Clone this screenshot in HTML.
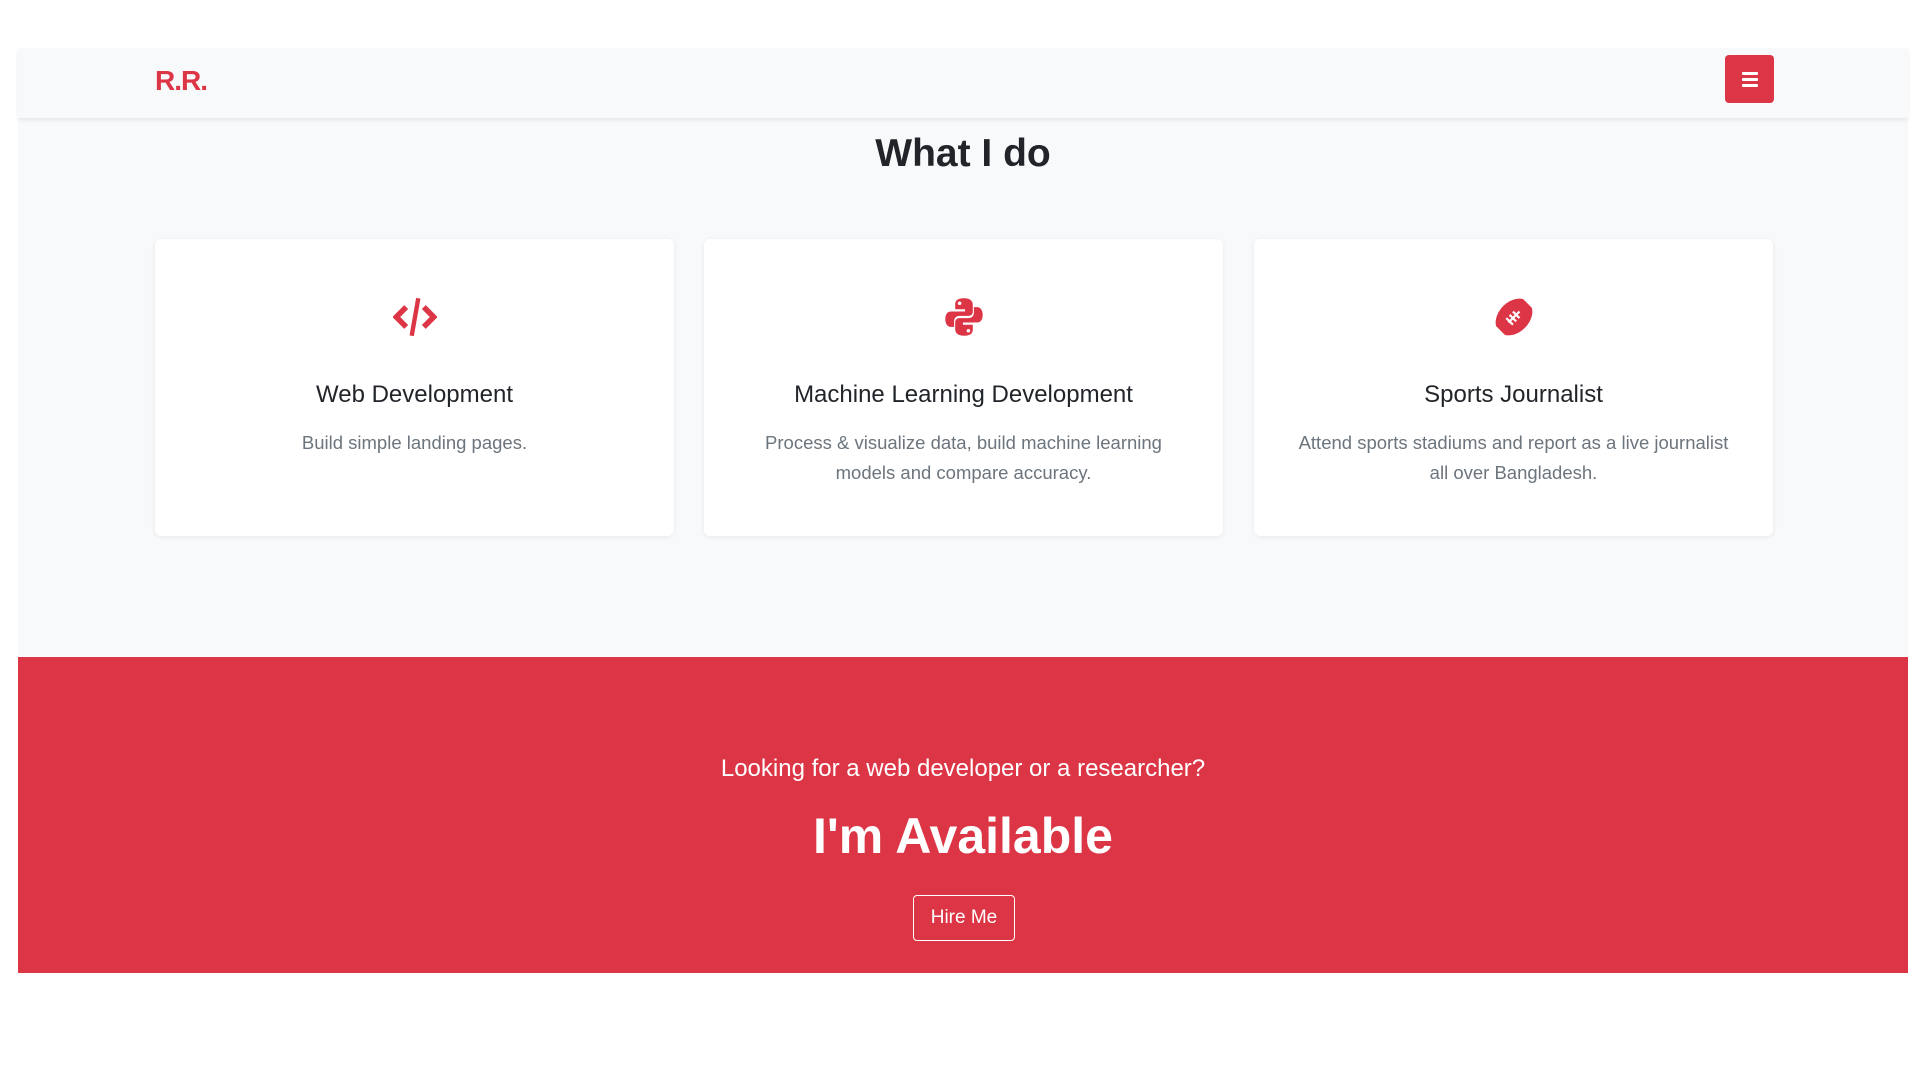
<!DOCTYPE html>
<html><head><meta charset="utf-8"><style>
*{box-sizing:border-box;margin:0;padding:0}
body{width:1920px;height:1080px;background:#fff;font-family:"Liberation Sans",sans-serif;position:relative;overflow:hidden}
.wrap{position:absolute;left:18px;top:48px;width:1890px;height:925px;background:#f8f9fa}
.nav{position:absolute;left:0;top:0;width:1890px;height:70px;background:#f8f9fa;box-shadow:0 2px 4px rgba(0,0,0,.08)}
.logo{position:absolute;left:137px;top:17px;font-size:28px;font-weight:bold;color:#dc3545;letter-spacing:-1px}
.burger{position:absolute;left:1707px;top:7px;width:49px;height:48px;background:#dc3545;border-radius:4px}
.burger i{position:absolute;left:17px;width:16px;height:3px;background:#fff;border-radius:1px}
h2{position:absolute;left:0;width:1890px;top:84px;text-align:center;font-size:39px;font-weight:bold;color:#212529}
.card{position:absolute;top:191px;width:519px;height:297px;background:#fff;border-radius:6px;box-shadow:0 1px 4px rgba(0,0,0,.07);text-align:center}
.card svg{position:absolute;left:50%;top:56px;margin-left:-22px}
.card h3{position:absolute;left:0;right:0;top:142px;font-size:24px;font-weight:normal;color:#212529}
.card p{position:absolute;left:40px;right:40px;top:189px;font-size:18.5px;line-height:30px;color:#6c757d}
.red{position:absolute;left:0;top:609px;width:1890px;height:316px;background:#dc3545;text-align:center;color:#fff}
.red .s{position:absolute;left:0;right:0;top:98px;font-size:24px}
.red .b{position:absolute;left:0;right:0;top:150px;font-size:50px;font-weight:bold}
.btn{position:absolute;left:895px;top:238px;width:102px;height:46px;border:1px solid #fff;border-radius:4px;font-size:19px;line-height:44px}
</style></head><body>
<div class="wrap">
<div class="nav"><div class="logo">R.R.</div><div class="burger"><i style="top:17px"></i><i style="top:23px"></i><i style="top:29px"></i></div></div>
<h2>What I do</h2>
<div class="card" style="left:137px">
<svg width="44" height="44" viewBox="0 0 40 40"><path d="M12 11 L3 20 L12 29" stroke="#dc3545" stroke-width="5" fill="none"/><path d="M28 11 L37 20 L28 29" stroke="#dc3545" stroke-width="5" fill="none"/><path d="M23 3 L17 37" stroke="#dc3545" stroke-width="4"/></svg>
<h3>Web Development</h3><p>Build simple landing pages.</p></div>
<div class="card" style="left:686px">
<svg width="44" height="44" viewBox="0 0 40 40"><path d="M20 3 C13 3 12 6 12 9 V13 H21 V15 H8 C4 15 3 19 3 22 C3 26 5 29 8 29 H11 V24 C11 21 13 19 16 19 H24 C27 19 28 17 28 15 V9 C28 5 25 3 20 3Z" fill="#dc3545"/><path d="M20 37 C27 37 28 34 28 31 V27 H19 V25 H32 C36 25 37 21 37 18 C37 14 35 11 32 11 H29 V16 C29 19 27 21 24 21 H16 C13 21 12 23 12 25 V31 C12 35 15 37 20 37Z" fill="#dc3545"/><circle cx="16" cy="7.5" r="1.6" fill="#fff"/><circle cx="24" cy="32.5" r="1.6" fill="#fff"/></svg>
<h3>Machine Learning Development</h3><p>Process &amp; visualize data, build machine learning models and compare accuracy.</p></div>
<div class="card" style="left:1236px">
<svg width="44" height="44" viewBox="0 0 40 40"><ellipse cx="20" cy="20" rx="19" ry="14" transform="rotate(-45 20 20)" fill="#dc3545"/><path d="M29 3 L37 11 M3 29 L11 37" stroke="#fff" stroke-width="2"/><path d="M15 25 L25 15 M16 18 L22 24 M19 15 L25 21 M13 21 L19 27" stroke="#fff" stroke-width="2"/></svg>
<h3>Sports Journalist</h3><p>Attend sports stadiums and report as a live journalist all over Bangladesh.</p></div>
<div class="red"><div class="s">Looking for a web developer or a researcher?</div><div class="b">I'm Available</div><div class="btn">Hire Me</div></div>
</div>
</body></html>
